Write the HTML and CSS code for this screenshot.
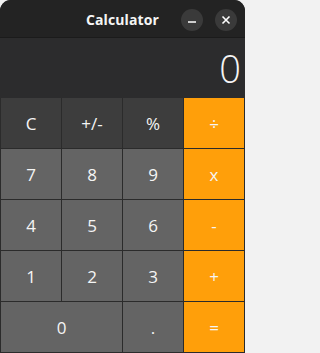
FILE: index.html
```html
<!DOCTYPE html>
<html>
<head>
<meta charset="utf-8">
<link rel="stylesheet" href="styles.css">
</head>
<body>
<div class="window">
  <header class="titlebar">
    <div class="spacer"></div>
    <div class="title">Calculator</div>
    <div class="controls">
      <button class="wbtn" aria-label="Minimize">
        <svg width="10" height="10" viewBox="0 0 10 10"><path d="M1 7h8" stroke="#fff" stroke-width="1.6"/></svg>
      </button>
      <button class="wbtn" aria-label="Close">
        <svg width="10" height="10" viewBox="0 0 10 10"><path d="M1.5 1.5l7 7M8.5 1.5l-7 7" stroke="#fff" stroke-width="1.6"/></svg>
      </button>
    </div>
  </header>
  <div class="display"><span class="value">0</span></div>
  <div class="keys">
    <div class="key fn">C</div>
    <div class="key fn">+/-</div>
    <div class="key fn">%</div>
    <div class="key op">÷</div>
    <div class="key">7</div>
    <div class="key">8</div>
    <div class="key">9</div>
    <div class="key op">x</div>
    <div class="key">4</div>
    <div class="key">5</div>
    <div class="key">6</div>
    <div class="key op">-</div>
    <div class="key">1</div>
    <div class="key">2</div>
    <div class="key">3</div>
    <div class="key op">+</div>
    <div class="key wide">0</div>
    <div class="key">.</div>
    <div class="key op">=</div>
  </div>
</div>
</body>
</html>
```
FILE: styles.css
```css
html, body {
  margin: 0;
  padding: 0;
  background: #f2f2f2;
}
body {
  font-family: "Open Sans", "Noto Sans", sans-serif;
  color: #f5f5f5;
}
.window {
  width: 245px;
  height: 353px;
  background: #2b2b2b;
  border-radius: 11px 11px 0 0;
  overflow: hidden;
  display: flex;
  flex-direction: column;
}
.titlebar {
  height: 37px;
  background: #232323;
  border-bottom: 1px solid #1b1b1b;
  display: grid;
  grid-template-columns: 1fr auto 1fr;
  align-items: center;
}
.title {
  font-weight: 700;
  font-size: 14px;
  letter-spacing: 0.1px;
  padding-top: 1px;
}
.controls {
  display: flex;
  justify-content: flex-end;
  gap: 12px;
  padding-right: 8px;
  padding-top: 3px;
}
.wbtn {
  width: 22px;
  height: 22px;
  border-radius: 50%;
  border: none;
  background: #3a3a3a;
  padding: 0;
  display: flex;
  align-items: center;
  justify-content: center;
}
.display {
  height: 60px;
  background: #2c2c2d;
  display: flex;
  align-items: center;
  justify-content: flex-end;
  padding-right: 4px;
}
.value {
  font-size: 38px;
  font-weight: 300;
  line-height: 1;
}
.keys {
  flex: 1;
  display: grid;
  grid-template-columns: repeat(4, 60px);
  grid-template-rows: repeat(5, 50px);
  gap: 1px;
  padding: 0 1px 1px;
  background: #2b2b2b;
}
.key {
  background: #646464;
  display: flex;
  align-items: center;
  justify-content: center;
  font-size: 17px;
}
.key.fn { background: #3d3d3d; }
.key.op { background: #ff9f0a; }
.key.wide { grid-column: span 2; }
```
